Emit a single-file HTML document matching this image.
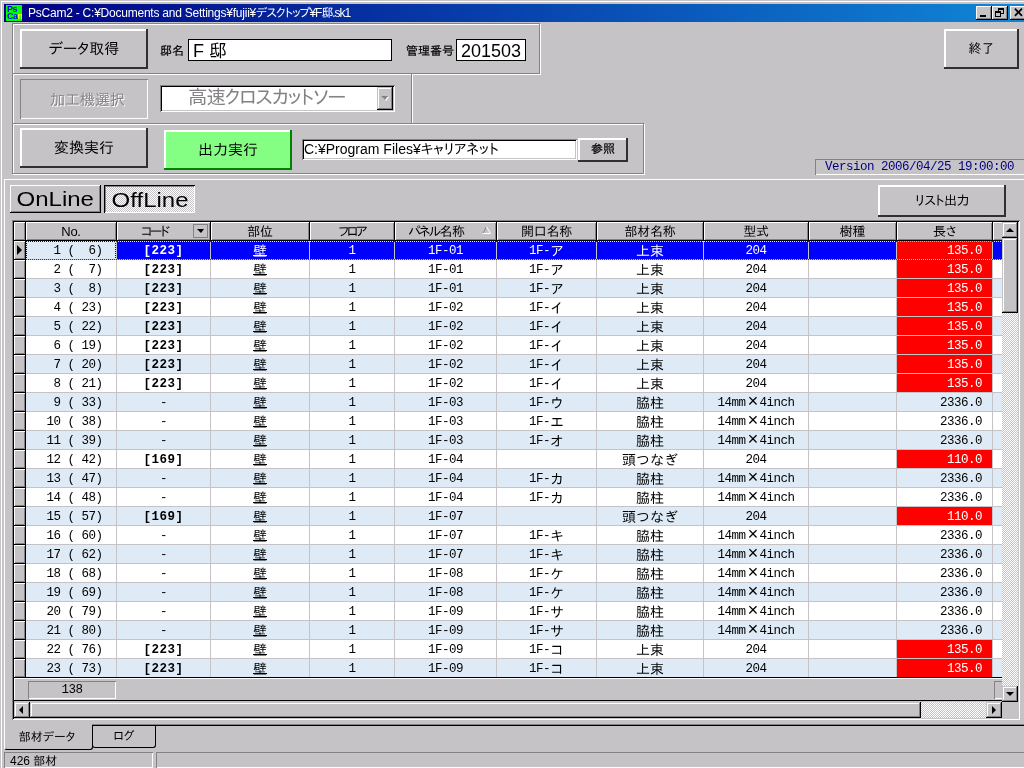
<!DOCTYPE html>
<html lang="ja"><head><meta charset="utf-8"><title>PsCam2</title>
<style>
html,body{margin:0;padding:0}
body{width:1024px;height:768px;overflow:hidden;background:#c6c3c6;position:relative;color:#000;
 font-family:"Liberation Sans","IPAPGothic","IPAGothic",sans-serif;font-size:12px}
.a{position:absolute;box-sizing:border-box}
.ui{font-family:"Liberation Sans","IPAPGothic","IPAGothic",sans-serif}
.mono{font-family:"Liberation Mono","IPAGothic",monospace}
/* window frame */
.wl{left:1px;top:1px;width:1px;height:767px;background:#fff}
.wt{left:1px;top:1px;width:1023px;height:1px;background:#fff}
.title{left:4px;top:4px;width:1020px;height:18px;background:linear-gradient(to right,#000084 0%,#1086d6 100%)}
.ticon{left:6px;top:5px;width:16px;height:16px;background:#00ff00;color:#0000ff;font:bold 9px/7px "Liberation Sans",sans-serif;overflow:hidden;letter-spacing:-0.5px}
.ticon span{position:absolute;left:1px}
.ttext{left:28px;top:4px;height:18px;line-height:19px;color:#fff;font-size:12px;white-space:nowrap}
.t1{letter-spacing:-0.23px}
.t2{letter-spacing:-1.05px}
.tb{top:6px;width:16px;height:14px;background:#c6c3c6;box-shadow:inset -1px -1px 0 #000,inset 1px 1px 0 #fff,inset -2px -2px 0 #848284}
/* etched panel */
.etch{border:1px solid #848284;box-shadow:1px 1px 0 #fff,inset 1px 1px 0 #fff}
/* buttons */
.btn{background:#c6c3c6;box-shadow:inset -2px -2px 0 #313031,inset 2px 2px 0 #fff;
 text-align:center;white-space:nowrap}
.btn.btn1{box-shadow:inset -1px -1px 0 #000,inset 1px 1px 0 #fff,inset -2px -2px 0 #848284}
.btn.dis{box-shadow:inset 1px 1px 0 #848284,inset -1px -1px 0 #fff;color:#848284;text-shadow:1px 1px 0 #fff}
.btn.green{background:#84ff84;box-shadow:inset -2px -2px 0 #008200,inset 2px 2px 0 #fff}
.f15{font-size:15px}
.lbl{font-size:12px;white-space:nowrap;-webkit-text-stroke:0.2px #000}
.inp{background:#fff;border:1px solid #000;white-space:nowrap;overflow:hidden}
.sunk{background:#fff;box-shadow:inset 1px 1px 0 #848284,inset -1px -1px 0 #fff,inset 2px 2px 0 #000,inset -2px -2px 0 #c6c3c6;white-space:nowrap;overflow:hidden}
.dither{background-color:#fff;background-image:conic-gradient(#c6c3c6 25%,#fff 0 50%,#c6c3c6 0 75%,#fff 0);background-size:2px 2px}
/* grid */
.grid{position:absolute;left:0;top:0;width:1024px;height:768px}
.hd{position:absolute;box-sizing:border-box;top:222px;height:19px;background:#c6c3c6;
 box-shadow:inset 1px 1px 0 #fff,inset -1px -1px 0 #848284;border-right:1px solid #000;border-bottom:1px solid #000;text-align:center;font-size:13px;line-height:19px;letter-spacing:-0.3px;white-space:nowrap;overflow:hidden}
.hd .k{letter-spacing:-2px}
.hd .ht{position:relative}
.row{position:absolute;left:0;width:1002px;height:19px}
.row .c{position:absolute;box-sizing:border-box;top:0;height:19px;border-right:1px solid #c6c3c6;border-bottom:1px solid #c6c3c6;text-align:center;
 font-family:"Liberation Mono","IPAGothic",monospace;font-size:12.5px;line-height:20px;white-space:pre;overflow:hidden;letter-spacing:-0.5px}
.row.o .c{background:#deebf7}
.row.e .c{background:#fff}
.row .c.bd{font-weight:bold;letter-spacing:0.5px}
.row .c.rt{text-align:right;padding-right:10px}
.row .c.red{background:#ff0000;color:#fff}
.row .c u{text-decoration:underline}
.row.sel .c{background:#0000ff;color:#fff}
.row.sel .c.no{background:#deebf7;color:#000}
.row.sel .c.red{background:#ff0000}
.ri{position:absolute;box-sizing:border-box;left:14px;top:0;width:12px;height:19px;background:#c6c3c6;box-shadow:inset 1px 1px 0 #fff,inset -1px -1px 0 #848284;border-right:1px solid #000;border-bottom:1px solid #000}
.ri b{position:absolute;left:3px;top:4px;width:0;height:0;border-left:5px solid #000;border-top:5px solid transparent;border-bottom:5px solid transparent}

.ddbtn{position:absolute;box-sizing:border-box;left:76px;top:2px;width:15px;height:14px;border:1px solid #848284;background:#c6c3c6}
.ddbtn i{position:absolute;left:3px;top:4px;border-top:4px solid #000;border-left:4px solid transparent;border-right:3px solid transparent}
.sortup{position:absolute;left:87px;top:4px}
.hd.pr{padding-right:18px}
.row .c .j{font-size:14px;letter-spacing:0;line-height:18px;position:relative;top:1.5px}
.row .c .x{display:inline-block;width:14px;text-align:center;letter-spacing:0;font-size:14px;line-height:18px;transform:scale(1.3)}
.fx{position:absolute;mix-blend-mode:difference;background:repeating-linear-gradient(90deg,#fff 0 1px,#000 1px 2px)}
.fy{position:absolute;mix-blend-mode:difference;background:repeating-linear-gradient(180deg,#000 0 1px,#fff 1px 2px)}
.sb{background:#c6c3c6;box-shadow:inset -1px -1px 0 #000,inset 1px 1px 0 #c6c3c6,inset -2px -2px 0 #848284,inset 2px 2px 0 #fff}

</style></head><body>
<div class="a wl"></div><div class="a wt"></div>
<div class="a title"></div>
<div class="a ticon"><span style="top:1px">Ps</span><span style="top:8px">Ca<span style="position:static;color:#ffff00">m</span></span></div>
<div class="a ttext"><span class="t1">PsCam2 - C:¥Documents and Settings¥fujii¥</span><span class="t2">デスクトップ¥F邸.sk1</span></div>
<div class="a tb" style="left:976px"><i class="a" style="left:4px;top:9px;width:6px;height:2px;background:#000"></i></div>
<div class="a tb" style="left:992px"><i class="a" style="left:6px;top:2px;width:6px;height:6px;border:1px solid #000;border-top-width:2px"></i><i class="a" style="left:3px;top:5px;width:6px;height:6px;border:1px solid #000;border-top-width:2px;background:#c6c3c6"></i></div>
<div class="a tb" style="left:1010px;font:bold 13px/13px 'Liberation Sans',sans-serif;text-align:center">✕</div>

<div class="a etch" style="left:12px;top:23px;width:528px;height:51px"></div>
<div class="a etch" style="left:12px;top:73px;width:400px;height:51px"></div>
<div class="a etch" style="left:12px;top:123px;width:632px;height:51px"></div>

<div class="a btn f15" style="left:20px;top:29px;width:128px;height:40px;line-height:39px">データ取得</div>
<div class="a lbl" style="left:160px;top:44px">邸名</div>
<div class="a inp" style="left:188px;top:39px;width:204px;height:22px;font-size:18px;line-height:22px;padding-left:4px">F 邸</div>
<div class="a lbl" style="left:406px;top:44px">管理番号</div>
<div class="a inp" style="left:456px;top:39px;width:70px;height:22px;font-size:18px;line-height:22px;padding-left:4px">201503</div>

<div class="a btn dis f15" style="left:20px;top:79px;width:128px;height:40px;line-height:41px;padding-left:7px">加工機選択</div>
<div class="a sunk" style="left:160px;top:85px;width:235px;height:27px;font-size:19.5px;line-height:25px;color:#848284;padding-left:28px;letter-spacing:-1.1px">高速クロスカットソー</div>
<div class="a sb" style="left:377px;top:87px;width:16px;height:23px"><i class="a" style="left:5px;top:10px;border-top:4px solid #fff;border-left:4px solid transparent;border-right:3px solid transparent"></i><i class="a" style="left:4px;top:9px;border-top:4px solid #848284;border-left:4px solid transparent;border-right:3px solid transparent"></i></div>

<div class="a btn f15" style="left:20px;top:128px;width:128px;height:40px;line-height:39px">変換実行</div>
<div class="a btn green f15" style="left:164px;top:130px;width:128px;height:40px;line-height:40px">出力実行</div>
<div class="a sunk" style="left:302px;top:139px;width:275px;height:21px;font-size:14px;line-height:21px;padding-left:2px">C:¥Program Files¥キャリアネット</div>
<div class="a btn lbl" style="left:578px;top:138px;width:50px;height:24px;line-height:23px">参照</div>

<div class="a btn f15" style="left:944px;top:29px;width:75px;height:40px;line-height:39px;font-size:13px">終了</div>

<div class="a mono" style="left:815px;top:159px;width:215px;height:16px;box-shadow:inset 1px 1px 0 #848284,inset -1px -1px 0 #fff;color:#000084;font-size:12.5px;line-height:16px;letter-spacing:-0.5px;padding-left:10px;white-space:nowrap">Version 2006/04/25 19:00:00</div>

<!-- tab body -->
<div class="a" style="left:4px;top:179px;width:1020px;height:1px;background:#fff"></div>
<div class="a" style="left:4px;top:179px;width:1px;height:570px;background:#fff"></div>

<div class="a btn btn1" style="left:10px;top:185px;width:91px;height:28px;font-size:20px;line-height:29px"><span style="display:inline-block;transform:scaleX(1.2)">OnLine</span></div>
<div class="a dither" style="left:104px;top:185px;width:91px;height:28px;font-size:20px;line-height:30px;padding-left:2px;text-align:center;box-shadow:inset 1px 1px 0 #000,inset -1px -1px 0 #fff,inset 2px 2px 0 #848284"><span style="display:inline-block;transform:scaleX(1.2)">OffLine</span></div>
<div class="a btn" style="left:878px;top:185px;width:128px;height:32px;line-height:31px;font-size:13px;letter-spacing:-0.5px">リスト出力</div>

<!-- grid frame -->
<div class="a" style="left:12px;top:220px;width:1008px;height:500px;box-shadow:inset 1px 1px 0 #848284,inset -1px -1px 0 #fff,inset 2px 2px 0 #000"></div>
<div class="grid">
<div class="hd ind" style="left:14px;width:12px"></div>
<div class="hd" style="left:26px;width:91px"><span class="ht">No.</span></div>
<div class="hd pr" style="left:117px;width:94px"><span class="ht"><span class="k">コード</span></span><span class="ddbtn"><i></i></span></div>
<div class="hd" style="left:211px;width:99px"><span class="ht">部位</span></div>
<div class="hd" style="left:310px;width:85px"><span class="ht"><span class="k">フロア</span></span></div>
<div class="hd pr" style="left:395px;width:102px"><span class="ht"><span class="k">パネル</span>名称</span><svg class="sortup" width="10" height="9" viewBox="0 0 10 9"><path d="M1 7.5 L4.5 0.5" stroke="#848284" fill="none"/><path d="M4.5 0.5 L8.5 7.5 L0.5 7.5" stroke="#fff" fill="none"/></svg></div>
<div class="hd" style="left:497px;width:100px"><span class="ht">開口名称</span></div>
<div class="hd" style="left:597px;width:107px"><span class="ht">部材名称</span></div>
<div class="hd" style="left:704px;width:105px"><span class="ht">型式</span></div>
<div class="hd" style="left:809px;width:88px"><span class="ht">樹種</span></div>
<div class="hd" style="left:897px;width:96px"><span class="ht">長さ</span></div>
<div class="hd" style="left:993px;width:20px"><span class="ht"></span></div>
<div class="row o sel" style="top:241px">
<div class="ri"><b></b></div>
<div class="c no" style="left:26px;width:91px">  1 (  6)</div>
<div class="c bd" style="left:117px;width:94px">[223]</div>
<div class="c ul" style="left:211px;width:99px"><u><span class="j">壁</span></u></div>
<div class="c" style="left:310px;width:85px">1</div>
<div class="c" style="left:395px;width:102px">1F-01</div>
<div class="c" style="left:497px;width:100px">1F-<span class="j">ア</span></div>
<div class="c" style="left:597px;width:107px"><span class="j">上束</span></div>
<div class="c" style="left:704px;width:105px">204</div>
<div class="c" style="left:809px;width:88px"></div>
<div class="c rt red" style="left:897px;width:96px">135.0</div>
<div class="c" style="left:993px;width:20px"></div>
<i class="fx" style="left:26px;top:0;width:976px;height:1px"></i><i class="fx" style="left:26px;top:18px;width:976px;height:1px"></i><i class="fy" style="left:26px;top:1px;width:1px;height:17px"></i><i class="fy" style="left:115px;top:1px;width:1px;height:17px"></i>
</div>
<div class="row e" style="top:260px">
<div class="ri"></div>
<div class="c no" style="left:26px;width:91px">  2 (  7)</div>
<div class="c bd" style="left:117px;width:94px">[223]</div>
<div class="c ul" style="left:211px;width:99px"><u><span class="j">壁</span></u></div>
<div class="c" style="left:310px;width:85px">1</div>
<div class="c" style="left:395px;width:102px">1F-01</div>
<div class="c" style="left:497px;width:100px">1F-<span class="j">ア</span></div>
<div class="c" style="left:597px;width:107px"><span class="j">上束</span></div>
<div class="c" style="left:704px;width:105px">204</div>
<div class="c" style="left:809px;width:88px"></div>
<div class="c rt red" style="left:897px;width:96px">135.0</div>
<div class="c" style="left:993px;width:20px"></div>
</div>
<div class="row o" style="top:279px">
<div class="ri"></div>
<div class="c no" style="left:26px;width:91px">  3 (  8)</div>
<div class="c bd" style="left:117px;width:94px">[223]</div>
<div class="c ul" style="left:211px;width:99px"><u><span class="j">壁</span></u></div>
<div class="c" style="left:310px;width:85px">1</div>
<div class="c" style="left:395px;width:102px">1F-01</div>
<div class="c" style="left:497px;width:100px">1F-<span class="j">ア</span></div>
<div class="c" style="left:597px;width:107px"><span class="j">上束</span></div>
<div class="c" style="left:704px;width:105px">204</div>
<div class="c" style="left:809px;width:88px"></div>
<div class="c rt red" style="left:897px;width:96px">135.0</div>
<div class="c" style="left:993px;width:20px"></div>
</div>
<div class="row e" style="top:298px">
<div class="ri"></div>
<div class="c no" style="left:26px;width:91px">  4 ( 23)</div>
<div class="c bd" style="left:117px;width:94px">[223]</div>
<div class="c ul" style="left:211px;width:99px"><u><span class="j">壁</span></u></div>
<div class="c" style="left:310px;width:85px">1</div>
<div class="c" style="left:395px;width:102px">1F-02</div>
<div class="c" style="left:497px;width:100px">1F-<span class="j">イ</span></div>
<div class="c" style="left:597px;width:107px"><span class="j">上束</span></div>
<div class="c" style="left:704px;width:105px">204</div>
<div class="c" style="left:809px;width:88px"></div>
<div class="c rt red" style="left:897px;width:96px">135.0</div>
<div class="c" style="left:993px;width:20px"></div>
</div>
<div class="row o" style="top:317px">
<div class="ri"></div>
<div class="c no" style="left:26px;width:91px">  5 ( 22)</div>
<div class="c bd" style="left:117px;width:94px">[223]</div>
<div class="c ul" style="left:211px;width:99px"><u><span class="j">壁</span></u></div>
<div class="c" style="left:310px;width:85px">1</div>
<div class="c" style="left:395px;width:102px">1F-02</div>
<div class="c" style="left:497px;width:100px">1F-<span class="j">イ</span></div>
<div class="c" style="left:597px;width:107px"><span class="j">上束</span></div>
<div class="c" style="left:704px;width:105px">204</div>
<div class="c" style="left:809px;width:88px"></div>
<div class="c rt red" style="left:897px;width:96px">135.0</div>
<div class="c" style="left:993px;width:20px"></div>
</div>
<div class="row e" style="top:336px">
<div class="ri"></div>
<div class="c no" style="left:26px;width:91px">  6 ( 19)</div>
<div class="c bd" style="left:117px;width:94px">[223]</div>
<div class="c ul" style="left:211px;width:99px"><u><span class="j">壁</span></u></div>
<div class="c" style="left:310px;width:85px">1</div>
<div class="c" style="left:395px;width:102px">1F-02</div>
<div class="c" style="left:497px;width:100px">1F-<span class="j">イ</span></div>
<div class="c" style="left:597px;width:107px"><span class="j">上束</span></div>
<div class="c" style="left:704px;width:105px">204</div>
<div class="c" style="left:809px;width:88px"></div>
<div class="c rt red" style="left:897px;width:96px">135.0</div>
<div class="c" style="left:993px;width:20px"></div>
</div>
<div class="row o" style="top:355px">
<div class="ri"></div>
<div class="c no" style="left:26px;width:91px">  7 ( 20)</div>
<div class="c bd" style="left:117px;width:94px">[223]</div>
<div class="c ul" style="left:211px;width:99px"><u><span class="j">壁</span></u></div>
<div class="c" style="left:310px;width:85px">1</div>
<div class="c" style="left:395px;width:102px">1F-02</div>
<div class="c" style="left:497px;width:100px">1F-<span class="j">イ</span></div>
<div class="c" style="left:597px;width:107px"><span class="j">上束</span></div>
<div class="c" style="left:704px;width:105px">204</div>
<div class="c" style="left:809px;width:88px"></div>
<div class="c rt red" style="left:897px;width:96px">135.0</div>
<div class="c" style="left:993px;width:20px"></div>
</div>
<div class="row e" style="top:374px">
<div class="ri"></div>
<div class="c no" style="left:26px;width:91px">  8 ( 21)</div>
<div class="c bd" style="left:117px;width:94px">[223]</div>
<div class="c ul" style="left:211px;width:99px"><u><span class="j">壁</span></u></div>
<div class="c" style="left:310px;width:85px">1</div>
<div class="c" style="left:395px;width:102px">1F-02</div>
<div class="c" style="left:497px;width:100px">1F-<span class="j">イ</span></div>
<div class="c" style="left:597px;width:107px"><span class="j">上束</span></div>
<div class="c" style="left:704px;width:105px">204</div>
<div class="c" style="left:809px;width:88px"></div>
<div class="c rt red" style="left:897px;width:96px">135.0</div>
<div class="c" style="left:993px;width:20px"></div>
</div>
<div class="row o" style="top:393px">
<div class="ri"></div>
<div class="c no" style="left:26px;width:91px">  9 ( 33)</div>
<div class="c" style="left:117px;width:94px">-</div>
<div class="c ul" style="left:211px;width:99px"><u><span class="j">壁</span></u></div>
<div class="c" style="left:310px;width:85px">1</div>
<div class="c" style="left:395px;width:102px">1F-03</div>
<div class="c" style="left:497px;width:100px">1F-<span class="j">ウ</span></div>
<div class="c" style="left:597px;width:107px"><span class="j">脇柱</span></div>
<div class="c" style="left:704px;width:105px">14mm<span class="x">×</span>4inch</div>
<div class="c" style="left:809px;width:88px"></div>
<div class="c rt" style="left:897px;width:96px">2336.0</div>
<div class="c" style="left:993px;width:20px"></div>
</div>
<div class="row e" style="top:412px">
<div class="ri"></div>
<div class="c no" style="left:26px;width:91px"> 10 ( 38)</div>
<div class="c" style="left:117px;width:94px">-</div>
<div class="c ul" style="left:211px;width:99px"><u><span class="j">壁</span></u></div>
<div class="c" style="left:310px;width:85px">1</div>
<div class="c" style="left:395px;width:102px">1F-03</div>
<div class="c" style="left:497px;width:100px">1F-<span class="j">エ</span></div>
<div class="c" style="left:597px;width:107px"><span class="j">脇柱</span></div>
<div class="c" style="left:704px;width:105px">14mm<span class="x">×</span>4inch</div>
<div class="c" style="left:809px;width:88px"></div>
<div class="c rt" style="left:897px;width:96px">2336.0</div>
<div class="c" style="left:993px;width:20px"></div>
</div>
<div class="row o" style="top:431px">
<div class="ri"></div>
<div class="c no" style="left:26px;width:91px"> 11 ( 39)</div>
<div class="c" style="left:117px;width:94px">-</div>
<div class="c ul" style="left:211px;width:99px"><u><span class="j">壁</span></u></div>
<div class="c" style="left:310px;width:85px">1</div>
<div class="c" style="left:395px;width:102px">1F-03</div>
<div class="c" style="left:497px;width:100px">1F-<span class="j">オ</span></div>
<div class="c" style="left:597px;width:107px"><span class="j">脇柱</span></div>
<div class="c" style="left:704px;width:105px">14mm<span class="x">×</span>4inch</div>
<div class="c" style="left:809px;width:88px"></div>
<div class="c rt" style="left:897px;width:96px">2336.0</div>
<div class="c" style="left:993px;width:20px"></div>
</div>
<div class="row e" style="top:450px">
<div class="ri"></div>
<div class="c no" style="left:26px;width:91px"> 12 ( 42)</div>
<div class="c bd" style="left:117px;width:94px">[169]</div>
<div class="c ul" style="left:211px;width:99px"><u><span class="j">壁</span></u></div>
<div class="c" style="left:310px;width:85px">1</div>
<div class="c" style="left:395px;width:102px">1F-04</div>
<div class="c" style="left:497px;width:100px"></div>
<div class="c" style="left:597px;width:107px"><span class="j">頭つなぎ</span></div>
<div class="c" style="left:704px;width:105px">204</div>
<div class="c" style="left:809px;width:88px"></div>
<div class="c rt red" style="left:897px;width:96px">110.0</div>
<div class="c" style="left:993px;width:20px"></div>
</div>
<div class="row o" style="top:469px">
<div class="ri"></div>
<div class="c no" style="left:26px;width:91px"> 13 ( 47)</div>
<div class="c" style="left:117px;width:94px">-</div>
<div class="c ul" style="left:211px;width:99px"><u><span class="j">壁</span></u></div>
<div class="c" style="left:310px;width:85px">1</div>
<div class="c" style="left:395px;width:102px">1F-04</div>
<div class="c" style="left:497px;width:100px">1F-<span class="j">カ</span></div>
<div class="c" style="left:597px;width:107px"><span class="j">脇柱</span></div>
<div class="c" style="left:704px;width:105px">14mm<span class="x">×</span>4inch</div>
<div class="c" style="left:809px;width:88px"></div>
<div class="c rt" style="left:897px;width:96px">2336.0</div>
<div class="c" style="left:993px;width:20px"></div>
</div>
<div class="row e" style="top:488px">
<div class="ri"></div>
<div class="c no" style="left:26px;width:91px"> 14 ( 48)</div>
<div class="c" style="left:117px;width:94px">-</div>
<div class="c ul" style="left:211px;width:99px"><u><span class="j">壁</span></u></div>
<div class="c" style="left:310px;width:85px">1</div>
<div class="c" style="left:395px;width:102px">1F-04</div>
<div class="c" style="left:497px;width:100px">1F-<span class="j">カ</span></div>
<div class="c" style="left:597px;width:107px"><span class="j">脇柱</span></div>
<div class="c" style="left:704px;width:105px">14mm<span class="x">×</span>4inch</div>
<div class="c" style="left:809px;width:88px"></div>
<div class="c rt" style="left:897px;width:96px">2336.0</div>
<div class="c" style="left:993px;width:20px"></div>
</div>
<div class="row o" style="top:507px">
<div class="ri"></div>
<div class="c no" style="left:26px;width:91px"> 15 ( 57)</div>
<div class="c bd" style="left:117px;width:94px">[169]</div>
<div class="c ul" style="left:211px;width:99px"><u><span class="j">壁</span></u></div>
<div class="c" style="left:310px;width:85px">1</div>
<div class="c" style="left:395px;width:102px">1F-07</div>
<div class="c" style="left:497px;width:100px"></div>
<div class="c" style="left:597px;width:107px"><span class="j">頭つなぎ</span></div>
<div class="c" style="left:704px;width:105px">204</div>
<div class="c" style="left:809px;width:88px"></div>
<div class="c rt red" style="left:897px;width:96px">110.0</div>
<div class="c" style="left:993px;width:20px"></div>
</div>
<div class="row e" style="top:526px">
<div class="ri"></div>
<div class="c no" style="left:26px;width:91px"> 16 ( 60)</div>
<div class="c" style="left:117px;width:94px">-</div>
<div class="c ul" style="left:211px;width:99px"><u><span class="j">壁</span></u></div>
<div class="c" style="left:310px;width:85px">1</div>
<div class="c" style="left:395px;width:102px">1F-07</div>
<div class="c" style="left:497px;width:100px">1F-<span class="j">キ</span></div>
<div class="c" style="left:597px;width:107px"><span class="j">脇柱</span></div>
<div class="c" style="left:704px;width:105px">14mm<span class="x">×</span>4inch</div>
<div class="c" style="left:809px;width:88px"></div>
<div class="c rt" style="left:897px;width:96px">2336.0</div>
<div class="c" style="left:993px;width:20px"></div>
</div>
<div class="row o" style="top:545px">
<div class="ri"></div>
<div class="c no" style="left:26px;width:91px"> 17 ( 62)</div>
<div class="c" style="left:117px;width:94px">-</div>
<div class="c ul" style="left:211px;width:99px"><u><span class="j">壁</span></u></div>
<div class="c" style="left:310px;width:85px">1</div>
<div class="c" style="left:395px;width:102px">1F-07</div>
<div class="c" style="left:497px;width:100px">1F-<span class="j">キ</span></div>
<div class="c" style="left:597px;width:107px"><span class="j">脇柱</span></div>
<div class="c" style="left:704px;width:105px">14mm<span class="x">×</span>4inch</div>
<div class="c" style="left:809px;width:88px"></div>
<div class="c rt" style="left:897px;width:96px">2336.0</div>
<div class="c" style="left:993px;width:20px"></div>
</div>
<div class="row e" style="top:564px">
<div class="ri"></div>
<div class="c no" style="left:26px;width:91px"> 18 ( 68)</div>
<div class="c" style="left:117px;width:94px">-</div>
<div class="c ul" style="left:211px;width:99px"><u><span class="j">壁</span></u></div>
<div class="c" style="left:310px;width:85px">1</div>
<div class="c" style="left:395px;width:102px">1F-08</div>
<div class="c" style="left:497px;width:100px">1F-<span class="j">ケ</span></div>
<div class="c" style="left:597px;width:107px"><span class="j">脇柱</span></div>
<div class="c" style="left:704px;width:105px">14mm<span class="x">×</span>4inch</div>
<div class="c" style="left:809px;width:88px"></div>
<div class="c rt" style="left:897px;width:96px">2336.0</div>
<div class="c" style="left:993px;width:20px"></div>
</div>
<div class="row o" style="top:583px">
<div class="ri"></div>
<div class="c no" style="left:26px;width:91px"> 19 ( 69)</div>
<div class="c" style="left:117px;width:94px">-</div>
<div class="c ul" style="left:211px;width:99px"><u><span class="j">壁</span></u></div>
<div class="c" style="left:310px;width:85px">1</div>
<div class="c" style="left:395px;width:102px">1F-08</div>
<div class="c" style="left:497px;width:100px">1F-<span class="j">ケ</span></div>
<div class="c" style="left:597px;width:107px"><span class="j">脇柱</span></div>
<div class="c" style="left:704px;width:105px">14mm<span class="x">×</span>4inch</div>
<div class="c" style="left:809px;width:88px"></div>
<div class="c rt" style="left:897px;width:96px">2336.0</div>
<div class="c" style="left:993px;width:20px"></div>
</div>
<div class="row e" style="top:602px">
<div class="ri"></div>
<div class="c no" style="left:26px;width:91px"> 20 ( 79)</div>
<div class="c" style="left:117px;width:94px">-</div>
<div class="c ul" style="left:211px;width:99px"><u><span class="j">壁</span></u></div>
<div class="c" style="left:310px;width:85px">1</div>
<div class="c" style="left:395px;width:102px">1F-09</div>
<div class="c" style="left:497px;width:100px">1F-<span class="j">サ</span></div>
<div class="c" style="left:597px;width:107px"><span class="j">脇柱</span></div>
<div class="c" style="left:704px;width:105px">14mm<span class="x">×</span>4inch</div>
<div class="c" style="left:809px;width:88px"></div>
<div class="c rt" style="left:897px;width:96px">2336.0</div>
<div class="c" style="left:993px;width:20px"></div>
</div>
<div class="row o" style="top:621px">
<div class="ri"></div>
<div class="c no" style="left:26px;width:91px"> 21 ( 80)</div>
<div class="c" style="left:117px;width:94px">-</div>
<div class="c ul" style="left:211px;width:99px"><u><span class="j">壁</span></u></div>
<div class="c" style="left:310px;width:85px">1</div>
<div class="c" style="left:395px;width:102px">1F-09</div>
<div class="c" style="left:497px;width:100px">1F-<span class="j">サ</span></div>
<div class="c" style="left:597px;width:107px"><span class="j">脇柱</span></div>
<div class="c" style="left:704px;width:105px">14mm<span class="x">×</span>4inch</div>
<div class="c" style="left:809px;width:88px"></div>
<div class="c rt" style="left:897px;width:96px">2336.0</div>
<div class="c" style="left:993px;width:20px"></div>
</div>
<div class="row e" style="top:640px">
<div class="ri"></div>
<div class="c no" style="left:26px;width:91px"> 22 ( 76)</div>
<div class="c bd" style="left:117px;width:94px">[223]</div>
<div class="c ul" style="left:211px;width:99px"><u><span class="j">壁</span></u></div>
<div class="c" style="left:310px;width:85px">1</div>
<div class="c" style="left:395px;width:102px">1F-09</div>
<div class="c" style="left:497px;width:100px">1F-<span class="j">コ</span></div>
<div class="c" style="left:597px;width:107px"><span class="j">上束</span></div>
<div class="c" style="left:704px;width:105px">204</div>
<div class="c" style="left:809px;width:88px"></div>
<div class="c rt red" style="left:897px;width:96px">135.0</div>
<div class="c" style="left:993px;width:20px"></div>
</div>
<div class="row o" style="top:659px">
<div class="ri"></div>
<div class="c no" style="left:26px;width:91px"> 23 ( 73)</div>
<div class="c bd" style="left:117px;width:94px">[223]</div>
<div class="c ul" style="left:211px;width:99px"><u><span class="j">壁</span></u></div>
<div class="c" style="left:310px;width:85px">1</div>
<div class="c" style="left:395px;width:102px">1F-09</div>
<div class="c" style="left:497px;width:100px">1F-<span class="j">コ</span></div>
<div class="c" style="left:597px;width:107px"><span class="j">上束</span></div>
<div class="c" style="left:704px;width:105px">204</div>
<div class="c" style="left:809px;width:88px"></div>
<div class="c rt red" style="left:897px;width:96px">135.0</div>
<div class="c" style="left:993px;width:20px"></div>
</div>
</div><!-- footer -->
<div class="a" style="left:14px;top:677px;width:988px;height:1px;background:#000"></div>
<div class="a" style="left:14px;top:678px;width:988px;height:22px;box-shadow:inset 1px 1px 0 #fff"></div>
<div class="a mono" style="left:28px;top:681px;width:88px;height:18px;box-shadow:inset 1px 1px 0 #848284,inset -1px -1px 0 #fff;text-align:center;font-size:12.5px;line-height:19px;letter-spacing:-0.5px">138</div>
<div class="a" style="left:994px;top:681px;width:8px;height:18px;box-shadow:inset 1px 1px 0 #848284,inset 0 -1px 0 #fff"></div>
<div class="a" style="left:13px;top:700px;width:1005px;height:1px;background:#000"></div>
<!-- vscroll -->
<div class="a dither" style="left:1002px;top:222px;width:16px;height:480px"></div>
<div class="a sb" style="left:1002px;top:222px;width:16px;height:16px"><i class="a" style="left:4px;top:6px;border-bottom:4px solid #000;border-left:4px solid transparent;border-right:4px solid transparent"></i></div>
<div class="a sb" style="left:1002px;top:238px;width:16px;height:75px"></div>
<div class="a sb" style="left:1002px;top:686px;width:16px;height:16px"><i class="a" style="left:4px;top:6px;border-top:4px solid #000;border-left:4px solid transparent;border-right:4px solid transparent"></i></div>
<!-- hscroll -->
<div class="a dither" style="left:14px;top:702px;width:988px;height:16px"></div>
<div class="a sb" style="left:14px;top:702px;width:16px;height:16px"><i class="a" style="left:5px;top:4px;border-right:4px solid #000;border-top:4px solid transparent;border-bottom:4px solid transparent"></i></div>
<div class="a sb" style="left:30px;top:702px;width:891px;height:16px"></div>
<div class="a sb" style="left:986px;top:702px;width:16px;height:16px"><i class="a" style="left:6px;top:4px;border-left:4px solid #000;border-top:4px solid transparent;border-bottom:4px solid transparent"></i></div>
<!-- tabs -->
<div class="a" style="left:92px;top:725px;width:932px;height:1px;background:#000"></div>
<div class="a" style="left:92px;top:724px;width:932px;height:1px;background:#848284"></div>
<div class="a" style="left:4px;top:725px;width:89px;height:25px;border:1px solid #000;border-top:none;border-left-color:#fff;border-radius:0 0 3px 3px;font-size:12px;line-height:25px;text-align:center;padding-right:3px">部材データ</div>
<div class="a" style="left:92px;top:725px;width:64px;height:23px;border:1px solid #000;border-top:none;border-radius:0 0 3px 3px;font-size:12px;line-height:22px;text-align:center">ログ</div>
<!-- status -->
<div class="a" style="left:4px;top:752px;width:149px;height:16px;box-shadow:inset 1px 1px 0 #848284,inset -1px -1px 0 #fff;font-size:12px;line-height:18px;padding-left:6px">426 部材</div>
<div class="a" style="left:156px;top:752px;width:870px;height:16px;box-shadow:inset 1px 1px 0 #848284,inset -1px -1px 0 #fff"></div>

</body></html>
